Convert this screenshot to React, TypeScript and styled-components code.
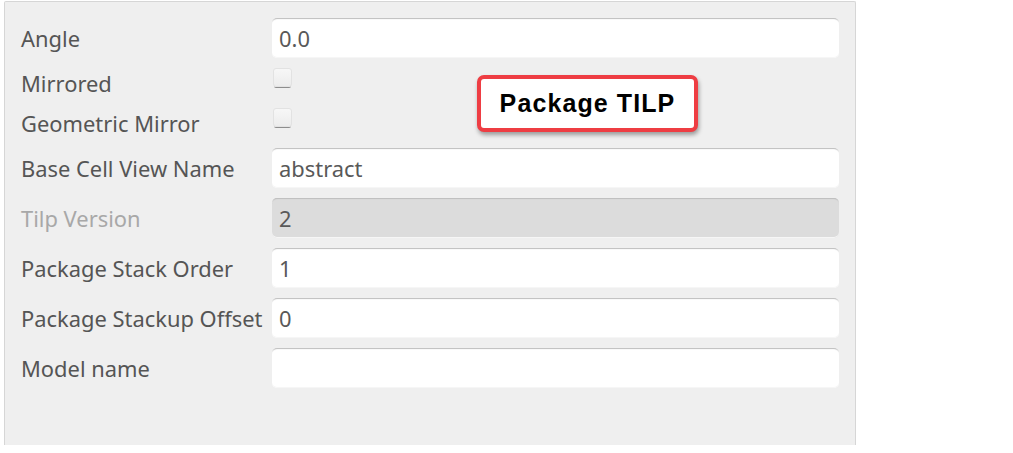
import React from "react";
import styled, { createGlobalStyle } from "styled-components";

const Global = createGlobalStyle`
  html, body { margin: 0; padding: 0; background: #ffffff; }
  body { font-family: "Noto Sans", "Open Sans", sans-serif; }
`;

const Page = styled.div`
  width: 1013px;
  height: 453px;
  position: relative;
  background: #ffffff;
  padding: 1px 0 0 4px;
  box-sizing: border-box;
`;

const Panel = styled.div`
  width: 852px;
  height: 444px;
  box-sizing: border-box;
  background: #efefef;
  border: 1px solid #d6d6d6;
  border-bottom: none;
  border-radius: 2px 2px 0 0;
  padding: 16px 16px 0 16px;
  display: flex;
  flex-direction: column;
  gap: 10px;
`;

const Row = styled.div<{ $h: number; $align?: string }>`
  display: grid;
  grid-template-columns: 251px 1fr;
  height: ${(p) => p.$h}px;
  align-items: ${(p) => p.$align || "center"};
`;

const Label = styled.div<{ $disabled?: boolean; $offset?: number }>`
  font-size: 21.9px;
  color: ${(p) => (p.$disabled ? "#a8a8a8" : "#555555")};
  white-space: nowrap;
  align-self: center;
  margin-top: ${(p) => p.$offset || 0}px;
`;

const Field = styled.div<{ $disabled?: boolean }>`
  height: 40px;
  box-sizing: border-box;
  border-radius: 5px;
  background: ${(p) => (p.$disabled ? "#dcdcdc" : "#ffffff")};
  box-shadow: inset 0 2px 1px -1px #bdbdbd, inset 0 -1px 0 #f6f6f6;
  padding: 0 7px;
  display: flex;
  align-items: center;
  font-size: 21.9px;
  color: #595959;
`;

const Check = styled.span`
  display: block;
  width: 19px;
  height: 19px;
  margin-left: 1px;
  align-self: start;
  box-sizing: border-box;
  border-radius: 3px;
  background: linear-gradient(#f7f7f7, #ececec);
  border: 1px solid #e2e2e2;
  box-shadow: 0 2px 0 -1px #8d8d8d;
`;

const Callout = styled.div`
  position: absolute;
  left: 477px;
  top: 75px;
  width: 221px;
  height: 57px;
  box-sizing: border-box;
  border: 4px solid #ee3d43;
  border-radius: 7px;
  background: #ffffff;
  box-shadow: 1px 3px 4px rgba(0, 0, 0, 0.35);
  display: flex;
  align-items: center;
  justify-content: center;
  font-family: "Liberation Sans", Arial, sans-serif;
  font-weight: bold;
  font-size: 25px;
  letter-spacing: 1.1px;
  color: #000000;
`;

const inputs: { label: string; value: string; disabled?: boolean }[] = [
  { label: "Base Cell View Name", value: "abstract" },
  { label: "Tilp Version", value: "2", disabled: true },
  { label: "Package Stack Order", value: "1" },
  { label: "Package Stackup Offset", value: "0" },
  { label: "Model name", value: "" },
];

export default function App() {
  return (
    <>
      <Global />
      <Page>
        <Panel>
          <Row $h={40}>
            <Label>Angle</Label>
            <Field>0.0</Field>
          </Row>
          <Row $h={30} $align="start">
            <Label $offset={1}>Mirrored</Label>
            <Check />
          </Row>
          <Row $h={30} $align="start">
            <Label $offset={1}>Geometric Mirror</Label>
            <Check />
          </Row>
          {inputs.map((r) => (
            <Row $h={40} key={r.label}>
              <Label $disabled={r.disabled}>{r.label}</Label>
              <Field $disabled={r.disabled}>{r.value}</Field>
            </Row>
          ))}
        </Panel>
        <Callout>Package TILP</Callout>
      </Page>
    </>
  );
}
